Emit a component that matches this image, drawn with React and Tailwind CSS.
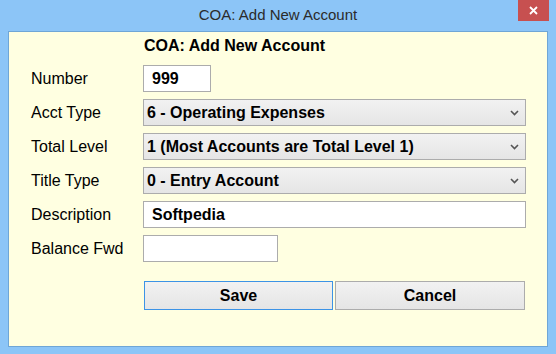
import React from "react";

const font = { fontFamily: '"Liberation Sans", Arial, sans-serif' };

const Chevron = () => (
  <svg width="9" height="6" viewBox="0 0 9 6" className="shrink-0">
    <polyline points="1,1 4.5,4.5 8,1" fill="none" stroke="#555" strokeWidth="1.6" />
  </svg>
);

const Select = ({ value }) => (
  <div className="h-[27px] w-[383px] flex items-center justify-between pl-[3px] pr-[6px] border border-[#acacac] bg-gradient-to-b from-[#f2f2f2] to-[#e5e5e5] text-[16px] font-bold text-black">
    <span>{value}</span>
    <Chevron />
  </div>
);

const Field = ({ value, w }) => (
  <div className={`h-[27px] ${w} flex items-center pl-[8px] border border-[#acacac] bg-white text-[16px] font-bold text-black`}>
    {value}
  </div>
);

const Row = ({ label, children }) => (
  <div className="flex items-center h-[27px]">
    <div className="w-[112px] text-[16px] text-black">{label}</div>
    {children}
  </div>
);

const App = () => {
  return (
    <div style={font} className="w-[556px] h-[354px] bg-[#8cc5f7] flex flex-col overflow-hidden">
      <div className="relative h-[31px] flex items-center justify-center text-[15px] text-[#2b2b2b]">
        COA: Add New Account
        <div className="absolute right-[7px] top-0 w-[31px] h-[21px] bg-[#c75050] flex items-center justify-center">
          <svg width="9" height="9" viewBox="0 0 9 9">
            <path d="M1 1 L8 8 M8 1 L1 8" stroke="#fff" strokeWidth="1.8" />
          </svg>
        </div>
      </div>
      <div className="mx-[8px] h-[316px] border border-[#6fa6d6] bg-[#ffffe1] pl-[22px] pt-[4px]">
        <div className="pl-[113px] h-[20px] leading-[20px] text-[16px] font-bold text-black">
          COA: Add New Account
        </div>
        <div className="mt-[9px] flex flex-col gap-[7px]">
          <Row label="Number">
            <Field value="999" w="w-[68px]" />
          </Row>
          <Row label="Acct Type">
            <Select value="6 - Operating Expenses" />
          </Row>
          <Row label="Total Level">
            <Select value="1 (Most Accounts are Total Level 1)" />
          </Row>
          <Row label="Title Type">
            <Select value="0 - Entry Account" />
          </Row>
          <Row label="Description">
            <Field value="Softpedia" w="w-[383px]" />
          </Row>
          <Row label="Balance Fwd">
            <Field value="" w="w-[135px]" />
          </Row>
        </div>
        <div className="mt-[19px] pl-[113px] flex gap-[2px]">
          <div className="w-[189px] h-[29px] flex items-center justify-center border border-[#3c93e6] bg-gradient-to-b from-[#f2f2f2] to-[#e5e5e5] text-[16px] font-bold text-black">
            Save
          </div>
          <div className="w-[190px] h-[29px] flex items-center justify-center border border-[#acacac] bg-gradient-to-b from-[#f2f2f2] to-[#e5e5e5] text-[16px] font-bold text-black">
            Cancel
          </div>
        </div>
      </div>
    </div>
  );
};

export default App;
